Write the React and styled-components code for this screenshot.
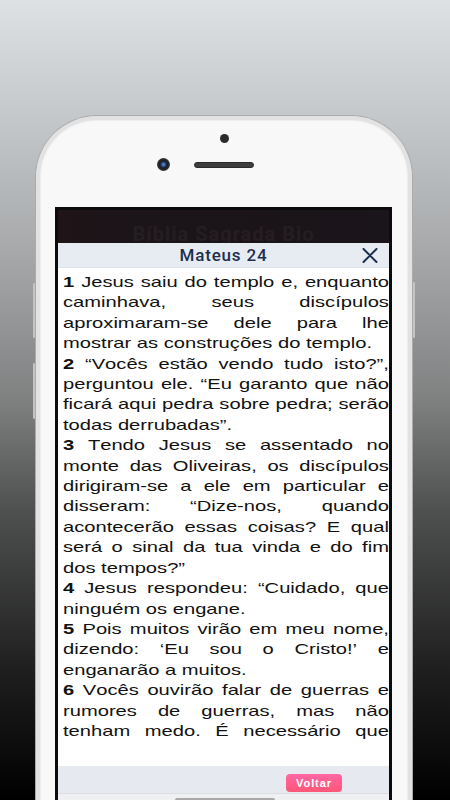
import React from "react"
import styled, { createGlobalStyle } from "styled-components"

const verses = [
  {
    n: 1,
    t: "Jesus saiu do templo e, enquanto caminhava, seus discípulos aproximaram-se dele para lhe mostrar as construções do templo.",
  },
  {
    n: 2,
    t: "“Vocês estão vendo tudo isto?”, perguntou ele. “Eu garanto que não ficará aqui pedra sobre pedra; serão todas derrubadas”.",
  },
  {
    n: 3,
    t: "Tendo Jesus se assentado no monte das Oliveiras, os discípulos dirigiram-se a ele em particular e disseram: “Dize-nos, quando acontecerão essas coisas? E qual será o sinal da tua vinda e do fim dos tempos?”",
  },
  { n: 4, t: "Jesus respondeu: “Cuidado, que ninguém os engane." },
  {
    n: 5,
    t: "Pois muitos virão em meu nome, dizendo: ‘Eu sou o Cristo!’ e enganarão a muitos.",
  },
  {
    n: 6,
    t: "Vocês ouvirão falar de guerras e rumores de guerras, mas não tenham medo. É necessário que tais coisas aconteçam, mas ainda não é o fim.",
  },
]

const App = () => {
  return (
    <>
      <GlobalStyle />
      <Stage>
        <Phone>
          <SideKey $side="left" $top={167} $height={55} />
          <SideKey $side="left" $top={247} $height={56} />
          <SideKey $side="right" $top={166} $height={56} />

          <TopBezel>
            <Dot />
            <SensorRow>
              <Camera />
              <Speaker />
            </SensorRow>
          </TopBezel>

          <Screen>
            <AppBar>
              <AppBarTitle>Bíblia Sagrada Bio</AppBarTitle>
            </AppBar>

            <ModalHeader>
              <ModalTitle>Mateus 24</ModalTitle>
              <CloseButton aria-label="Fechar">
                <svg width="16" height="15" viewBox="0 0 16 15">
                  <path
                    d="M1.5 1 L14.5 14 M14.5 1 L1.5 14"
                    stroke="#1c2f50"
                    strokeWidth="2"
                    strokeLinecap="round"
                  />
                </svg>
              </CloseButton>
            </ModalHeader>

            <ModalBody>
              <Verses>
                {verses.map(v => (
                  <Verse key={v.n}>
                    <b>{v.n}</b> {v.t}
                  </Verse>
                ))}
              </Verses>
            </ModalBody>

            <ModalFooter>
              <BackButton>Voltar</BackButton>
            </ModalFooter>

            <BottomStrip>
              <ScrollThumb />
            </BottomStrip>
          </Screen>
        </Phone>
      </Stage>
    </>
  )
}

const GlobalStyle = createGlobalStyle`
  html, body {
    margin: 0;
    padding: 0;
  }
  body {
    width: 450px;
    height: 800px;
    overflow: hidden;
    background: linear-gradient(
      180deg,
      #dee1e4 0%,
      #c4c7c9 15%,
      #a5a7a9 32%,
      #7f8181 50%,
      #4e4f4f 64%,
      #1e1e1e 84%,
      #000 100%
    );
    font-family: "Liberation Sans", Arial, sans-serif;
  }
`

const Stage = styled.div`
  width: 450px;
  height: 800px;
  padding-top: 115px;
  box-sizing: border-box;
  overflow: hidden;
`

const Phone = styled.div`
  position: relative;
  margin-left: 35px;
  width: 378px;
  height: 700px;
  box-sizing: border-box;
  border: 1px solid #a9abad;
  border-bottom: none;
  border-radius: 62px 62px 0 0;
  background: #f8f8f8;
  box-shadow: inset 0 0 0 4px #e2e2e2, inset 0 0 0 5px #ededed;
  display: flex;
  flex-direction: column;
`

const SideKey = styled.span`
  position: absolute;
  top: ${p => p.$top}px;
  ${p => (p.$side === "left" ? "left: -3px;" : "right: -3px;")}
  width: 2px;
  height: ${p => p.$height}px;
  background: #c2c4c5;
  border-radius: 1px;
`

const TopBezel = styled.div`
  height: 91px;
  padding-top: 18px;
  box-sizing: border-box;
  display: flex;
  flex-direction: column;
  align-items: center;
`

const Dot = styled.div`
  width: 9px;
  height: 9px;
  border-radius: 50%;
  background: #2b2b2b;
`

const SensorRow = styled.div`
  align-self: flex-start;
  margin: 15px 0 0 121px;
  display: flex;
  align-items: center;
  gap: 24px;
`

const Camera = styled.div`
  width: 13px;
  height: 13px;
  border-radius: 50%;
  background: radial-gradient(
    circle at 50% 50%,
    #4a72b8 0 1.5px,
    #1d3159 2.5px,
    #1e1e22 4px,
    #3a3a3a 6.5px
  );
`

const Speaker = styled.div`
  width: 60px;
  height: 6px;
  box-sizing: border-box;
  border-radius: 3px;
  background: #3e3e3e;
  border: 1px solid #2a2a2a;
`

const Screen = styled.div`
  flex: 1;
  margin: 0 20px 0 19px;
  border: 3px solid #0b0b0b;
  border-bottom: none;
  background: #eff0f2;
  display: flex;
  flex-direction: column;
  overflow: hidden;
`

const AppBar = styled.div`
  height: 33px;
  padding-top: 14px;
  box-sizing: border-box;
  overflow: hidden;
  display: flex;
  justify-content: center;
  background: linear-gradient(90deg, #1f1418 0%, #1b1418 22%, #1a151a 100%);
`

const AppBarTitle = styled.div`
  font-family: Roboto, "Liberation Sans", sans-serif;
  font-weight: 700;
  font-size: 20px;
  line-height: 20px;
  letter-spacing: 1px;
  color: #241e22;
`

const ModalHeader = styled.div`
  height: 25px;
  box-sizing: border-box;
  display: grid;
  grid-template-columns: 1fr auto 1fr;
  align-items: center;
  background: #e7ecf3;
  border-bottom: 1px solid #dde3ec;
`

const ModalTitle = styled.div`
  grid-column: 2;
  font-family: Roboto, "Liberation Sans", sans-serif;
  font-weight: 500;
  font-size: 17px;
  letter-spacing: 0.8px;
  color: #1c2f50;
`

const CloseButton = styled.div`
  grid-column: 3;
  justify-self: end;
  margin-right: 11px;
  display: flex;
`

const ModalBody = styled.div`
  height: 498px;
  padding: 4px 0 0 5px;
  box-sizing: border-box;
  background: #fff;
  overflow: hidden;
`

const Verses = styled.div`
  width: 242.7px;
  height: 470px;
  overflow: hidden;
  font-family: "Liberation Sans", Arial, sans-serif;
  font-size: 15px;
  font-kerning: none;
  line-height: 20.4px;
  text-align: justify;
  color: #111;
  transform: scaleX(1.343);
  transform-origin: left top;
`

const Verse = styled.p`
  margin: 0;
  & b {
    font-weight: 700;
  }
`

const ModalFooter = styled.div`
  height: 27px;
  padding: 8px 47px 0 0;
  box-sizing: border-box;
  display: flex;
  justify-content: flex-end;
  align-items: flex-start;
  background: #e6e9ef;
`

const BackButton = styled.div`
  width: 56px;
  height: 18px;
  border-radius: 4px;
  background: linear-gradient(180deg, #ff66a3 0%, #ff5678 100%);
  color: #fff;
  font-family: "Liberation Sans", Arial, sans-serif;
  font-weight: 700;
  font-size: 11px;
  letter-spacing: 0.9px;
  display: flex;
  align-items: center;
  justify-content: center;
`

const BottomStrip = styled.div`
  flex: 1;
  padding: 4px 0 0 117px;
  background: #eef0f2;
  border-top: 1px solid #dcdde0;
`

const ScrollThumb = styled.div`
  width: 100px;
  height: 4px;
  border-radius: 2px;
  background: #a8a8a8;
`

export default App
